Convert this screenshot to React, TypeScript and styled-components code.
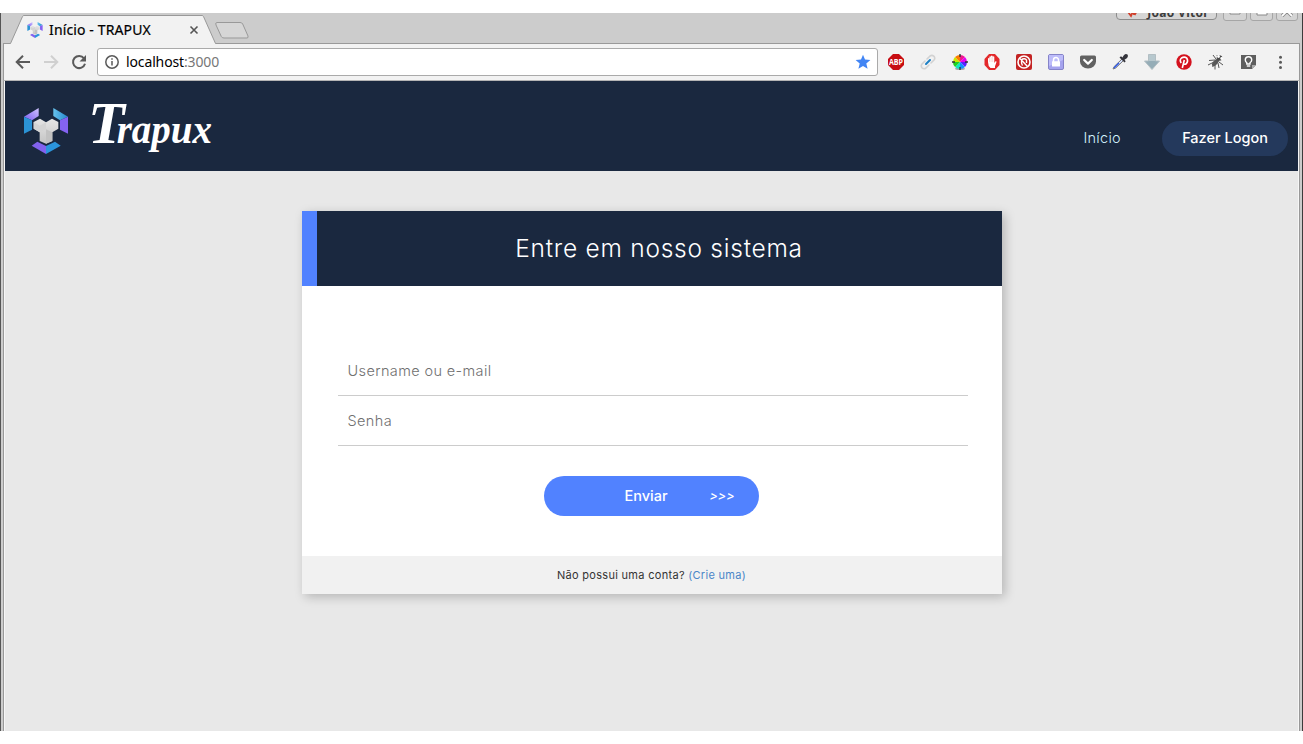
import React from 'react';
import styled, { createGlobalStyle } from 'styled-components';

const Global = createGlobalStyle`
  * { box-sizing: border-box; }
  html, body { margin: 0; padding: 0; background: #fff; }
  body { font-family: Inter, "Open Sans", sans-serif; overflow: hidden; }
  svg { display: block; flex: none; }
`;

const Screen = styled.div`
  width: 1303px;
  height: 744px;
  padding: 13px 0;
  background: #fff;
`;

const BrowserWindow = styled.div`
  height: 718px;
  display: flex;
  flex-direction: column;
  background: #ccc;
  border-left: 1px solid #555;
  border-right: 1px solid #3c3c3c;
`;

const TabStrip = styled.div`
  height: 30px;
  display: flex;
  align-items: flex-start;
  padding-left: 2px;
  flex: none;
  position: relative;
`;

const Tab = styled.div`
  position: relative;
  width: 208px;
  height: 31px;
  margin-left: 6px;
  z-index: 2;
`;

const TabShape = styled.svg`
  position: absolute;
  left: 0;
  top: 0;
`;

const TabContent = styled.div`
  position: relative;
  display: flex;
  align-items: center;
  height: 31px;
  padding: 3px 0 0 18px;
`;

const TabTitle = styled.span`
  margin-left: 6px;
  width: 140px;
  font: 14px/18px "Noto Sans", sans-serif;
  letter-spacing: 0.13px;
  color: #000;
  -webkit-text-stroke: 0.2px #000;
  white-space: nowrap;
`;

const NewTab = styled.svg`
  margin: 8px 0 0 -3px;
`;

const WindowControls = styled.div`
  margin-left: auto;
  height: 8px;
  display: flex;
  align-items: flex-end;
  overflow: hidden;
  padding-right: 4px;
`;

const ControlButton = styled.div<{ $width: number; $gap: number }>`
  width: ${p => p.$width}px;
  height: 20px;
  margin-left: ${p => p.$gap}px;
  border: 1px solid #a6a6a6;
  border-radius: 3px;
  background: #d4d4d4;
  display: flex;
  justify-content: center;
  align-items: center;
`;

const ProfileButton = styled.div`
  width: 101px;
  height: 16px;
  margin-bottom: 1px;
  padding: 1px 7px 0 9px;
  display: flex;
  align-items: center;
  justify-content: space-between;
  border: 1px solid #8c8c8c;
  border-radius: 4px;
  background: #d6d6d6;
  color: #3c3c3c;
  font: bold 12px/14px "Noto Sans", sans-serif;
  letter-spacing: 0.3px;
  white-space: nowrap;
`;

const Toolbar = styled.div`
  height: 38px;
  flex: none;
  margin: 0 2px;
  display: flex;
  align-items: center;
  background: #f2f2f2;
  border: 1px solid #999;
  border-bottom-color: #b5b5b5;
`;

const NavIcons = styled.div`
  width: 93px;
  display: flex;
  align-items: center;
  gap: 12px;
  padding-left: 11px;
  flex: none;
`;

const AddressBar = styled.div`
  width: 781px;
  height: 28px;
  display: flex;
  align-items: center;
  background: #fff;
  border: 1px solid #aaa;
  border-radius: 3px;
  padding: 0 6px 0 7px;
`;

const Url = styled.span`
  flex: 1;
  margin-left: 7px;
  font: 14px/20px "Noto Sans", sans-serif;
  letter-spacing: -0.13px;
  color: #000;
`;

const Port = styled.span`
  color: #777;
`;

const Extensions = styled.div`
  display: flex;
  margin-left: 2px;
`;

const Extension = styled.div`
  width: 32px;
  display: flex;
  justify-content: center;
  align-items: center;
`;

const Viewport = styled.div`
  flex: 1;
  margin: 0 2px;
  border: solid #999;
  border-width: 0 1px;
  padding: 0 1px;
  display: flex;
  background: #f6f6f6;
`;

const Page = styled.div`
  flex: 1;
  background: #e8e8e8;
  display: flex;
  flex-direction: column;
  align-items: center;
`;

const SiteHeader = styled.header`
  align-self: stretch;
  height: 90px;
  background: #1a283f;
  display: flex;
  align-items: flex-start;
  padding: 0 10px 0 19px;
`;

const Mark = styled.svg`
  margin-top: 27px;
`;

const Wordmark = styled.span`
  margin: 7px 0 0 20px;
  font: italic bold 39px/70px "Liberation Serif", serif;
  color: #fff;
`;

const Initial = styled.span`
  font-size: 60px;
  line-height: 70px;
  margin-right: -8px;
`;

const SiteNav = styled.nav`
  display: flex;
  align-items: center;
  margin: 40px 0 0 auto;
  height: 35px;
`;

const NavLink = styled.a`
  font-size: 14.500px;
  line-height: 20px;
  font-weight: 300;
  color: #d5f2fc;
  margin-right: 41px;
  padding-bottom: 2px;
  letter-spacing: 0.3px;
`;

const LogonButton = styled.button`
  width: 126px;
  height: 35px;
  padding: 0 0 2px;
  border: 0;
  border-radius: 18px;
  background: #24395c;
  color: #fff;
  font: 500 14.500px/20px Inter, sans-serif;
`;

const Card = styled.section`
  width: 700px;
  margin-top: 40px;
  background: #fff;
  box-shadow: 3px 3px 10px rgba(0, 0, 0, 0.22);
`;

const CardTitle = styled.h1`
  margin: 0;
  height: 75px;
  border-left: 15px solid #5182ff;
  background: #1a283f;
  color: #fff;
  font: 300 24.500px/75px Inter, sans-serif;
  letter-spacing: 0.75px;
  text-align: center;
`;

const LoginForm = styled.div`
  height: 270px;
  padding: 60px 34px 0 36px;
  display: flex;
  flex-direction: column;
`;

const Field = styled.div`
  height: 50px;
  padding-left: 10px;
  border-bottom: 1px solid #ccc;
  color: #707070;
  font-size: 14.500px;
  font-weight: 300;
  line-height: 49px;
  letter-spacing: 0.38px;
`;

const SubmitButton = styled.button`
  width: 215px;
  height: 40px;
  margin: 30px 0 0 206px;
  padding: 0 24px 0 81px;
  border: 0;
  border-radius: 20px;
  background: #5182ff;
  color: #fff;
  font: 500 14.500px/20px Inter, sans-serif;
  display: flex;
  align-items: center;
  justify-content: space-between;
`;

const Chevrons = styled.span`
  font-size: 12.500px;
  font-style: italic;
`;

const CardFooter = styled.div`
  height: 38px;
  background: #f1f1f1;
  color: #333;
  text-align: center;
  font-size: 11px;
  line-height: 38px;
  letter-spacing: 0.3px;
`;

const SignUpLink = styled.a`
  color: #4a86c8;
`;

function LogoPieces() {
  return (
    <>
      <defs>
        <linearGradient id="lilac" x1="0" x2="1" y1="1" y2="0">
          <stop offset="0" stopColor="#7b5cf0" />
          <stop offset="1" stopColor="#d0c4ff" />
        </linearGradient>
        <linearGradient id="sky" x1="0" x2="1">
          <stop offset="0" stopColor="#67c3ee" />
          <stop offset="1" stopColor="#2387cc" />
        </linearGradient>
        <linearGradient id="silver" x1="0" x2="0" y1="0" y2="1">
          <stop offset="0" stopColor="#e6e6e6" />
          <stop offset="1" stopColor="#c4c4c4" />
        </linearGradient>
      </defs>
      <path d="M72 110 116 84V108L96 121Z" fill="url(#lilac)" />
      <path d="M72 110 96 121V149L72 161Z" fill="#2b93d5" />
      <path d="M204 110 160 84V108L180 121Z" fill="url(#sky)" />
      <path d="M204 110 180 121V149L204 161Z" fill="#8463f2" />
      <path d="M95 197 112 185 138 198V222Z" fill="#8262ee" />
      <path d="M182 197 165 185 138 198V222Z" fill="#2b95dc" />
      <path d="M101 126 120 116 138 127 156 116 175 126V146L157 157V183L138 191 119 183V157L101 146Z" fill="url(#silver)" />
      <path d="M138 148V127L119 137 101 126V146L119 157Z" fill="#d4d4d4" />
      <path d="M138 148 157 157V183L138 191Z" fill="#c2c2c2" />
    </>
  );
}

function Abp() {
  return (
    <svg width="16" height="16" viewBox="0 0 16 16">
      <path d="M5 0h6l5 5v6l-5 5H5l-5-5V5Z" fill="#c70d12" />
      <text x="8" y="11" textAnchor="middle" fontFamily="Open Sans, sans-serif" fontWeight="700" fontSize="8" textLength="14" lengthAdjust="spacingAndGlyphs" fill="#fff">ABP</text>
    </svg>
  );
}

function LinkIcon() {
  return (
    <svg width="16" height="16" viewBox="0 0 16 16" fill="none" strokeLinecap="round">
      <path d="m7 5 3-3q2-1.500 4 .3 1.500 2 0 3.700l-3 3M9 11l-3 3q-2 1.500-4-.2-1.500-2 0-3.800l3-3" stroke="#d2d2d2" strokeWidth="1.600" />
      <path d="m6 10 4-4" stroke="#1c7fc4" strokeWidth="2" />
    </svg>
  );
}

const wheelColors = ['#f0188c', '#e800f0', '#5a20ff', '#1090ff', '#10e8c0', '#20d020', '#c8e800', '#ff7a00'];

function ColorWheel() {
  return (
    <svg width="16" height="16" viewBox="-8 -8 16 16">
      <ellipse cx="0" cy="6.800" rx="5" ry="1.200" fill="#aaa" />
      {wheelColors.map((color, i) => (
        <path key={color} d="M0 0V-7A7 7 0 0 1 5 -5Z" fill={color} transform={`rotate(${i * 45})`} />
      ))}
      <path d="M0-8v3M0 5v3M-8 0h3M5 0h3" stroke="#333" strokeWidth="1.400" />
    </svg>
  );
}

function HandStop() {
  return (
    <svg width="16" height="16" viewBox="0 0 16 16">
      <path d="M5 0h6l4.500 5v6L11 16H5L.5 11V5Z" fill="#e3292b" />
      <path d="M4 8V4.500q.7-1 1.400 0V2.700q.8-1 1.600 0V2q.8-1 1.600 0v.8q.9-1 1.700 0V9l1.200-1.800q1.300-.3 1 .8L11 12.300V14H6.500Q4 12 4 8Z" fill="#fff" />
      <path d="M5.500 4.500V8M7.100 3v5M8.700 3v5" stroke="#f3b7b7" strokeWidth=".5" />
    </svg>
  );
}

function BlockIcon() {
  return (
    <svg width="16" height="16" viewBox="0 0 16 16" fill="none">
      <rect width="16" height="16" rx="2" fill="#c32323" />
      <circle cx="8" cy="8" r="6" stroke="#fff" strokeWidth="1.600" />
      <path d="M4 4.500 11.500 12.500M6.500 11.500Q4.500 8 6.500 5q3-1 4 1v3" stroke="#fff" strokeWidth="1.400" />
    </svg>
  );
}

function LockIcon() {
  return (
    <svg width="16" height="16" viewBox="0 0 16 16">
      <rect x=".5" y=".5" width="15" height="15" rx="1.500" fill="#a5a3ee" stroke="#8583c8" />
      <path d="M1 1h14v5L1 12Z" fill="#bdbcfa" />
      <path d="M5.500 8V6a2.500 2.500 0 0 1 5 0v2" fill="none" stroke="#fff" strokeWidth="1.500" />
      <rect x="4" y="7.300" width="8" height="5.200" rx=".5" fill="#fff" />
    </svg>
  );
}

function PocketIcon() {
  return (
    <svg width="16" height="16" viewBox="0 0 16 16">
      <path d="M1.500 1.500h13q1.500 0 1.500 1.500v4.500a8 7 0 0 1-16 0V3q0-1.500 1.500-1.500Z" fill="#626262" />
      <path d="m4.200 6 3.800 3.600L11.800 6" fill="none" stroke="#fff" strokeWidth="2.200" strokeLinecap="round" strokeLinejoin="round" />
    </svg>
  );
}

function DropperIcon() {
  return (
    <svg width="16" height="16" viewBox="0 0 16 16">
      <path d="M10 5 2.200 12.500 1 15l2.700-1L11.500 6.500" fill="#d9e4ff" stroke="#777" />
      <path d="m7 9-5 5" stroke="#345de8" strokeWidth="1.500" />
      <path d="m7.500 3.500 5 5 1.200-1.200-1.200-1.500Q16 4 16 2T14 0Q12 0 10.500 3.500L9 2.200Z" fill="#35353c" />
    </svg>
  );
}

function DownloadIcon() {
  return (
    <svg width="16" height="16" viewBox="0 0 16 16">
      <path d="M4.500.5h7v6.500h4L8 15.500.5 7h4Z" fill="#95adb7" stroke="#b2bec3" />
      <path d="M5 1h6v6H5Z" fill="#b7c8ce" />
    </svg>
  );
}

function PinterestIcon() {
  return (
    <svg width="16" height="16" viewBox="0 0 16 16" fill="none">
      <circle cx="8" cy="8" r="7.700" fill="#d4121e" />
      <path d="M5.200 9Q3.200 6 5.500 4q3-1.800 5.300.2 1.800 3-.5 5.600-2 1.200-3-.5M8.300 6 6.300 14" stroke="#fff" strokeWidth="1.600" />
    </svg>
  );
}

function BugIcon() {
  return (
    <svg width="16" height="16" viewBox="0 0 16 16" fill="none">
      <path d="M9 7 4.500 13M7 6 1 6.500M6 8 0 11M7 10v5.500M10 9l1 5M11 8l4 3M8 5 5 1M10 4 9 1" stroke="#555" strokeWidth="1" />
      <ellipse cx="7.500" cy="8.500" rx="2.200" ry="4.600" transform="rotate(42 7.500 8.500)" fill="#575757" />
      <circle cx="11.500" cy="4" r="2.800" fill="#4b4b4b" />
      <circle cx="10.500" cy="2.500" r="1.400" fill="#fff" />
      <circle cx="13.700" cy="4.500" r="1.400" fill="#fff" />
    </svg>
  );
}

function KeepIcon() {
  return (
    <svg width="16" height="16" viewBox="0 0 16 16" fill="none">
      <path d="M1 1h15v10l-4 4H1Z" fill="#5e5e5e" />
      <path d="M12 15v-4h4Z" fill="#aaa" />
      <path d="M6.800 10V8.800Q5.300 7.500 5.300 6a3.200 3.200 0 0 1 6.400 0q0 1.500-1.700 2.800V10Z" stroke="#fff" strokeWidth="1.400" />
      <path d="M6.800 12h3.400" stroke="#fff" strokeWidth="1.400" />
    </svg>
  );
}

function MenuIcon() {
  return (
    <svg width="16" height="16" viewBox="0 0 16 16" fill="#5a5a5a">
      <circle cx="8.500" cy="3.200" r="1.500" /><circle cx="8.500" cy="8.300" r="1.500" /><circle cx="8.500" cy="13.400" r="1.500" />
    </svg>
  );
}

const extensionIcons = [Abp, LinkIcon, ColorWheel, HandStop, BlockIcon, LockIcon, PocketIcon, DropperIcon, DownloadIcon, PinterestIcon, BugIcon, KeepIcon, MenuIcon];

export default function App() {
  return (
    <Screen>
      <Global />
      <BrowserWindow>
        <TabStrip>
          <Tab>
            <TabShape width="208" height="31" viewBox="0 0 208 31">
              <path d="M0 30.500H1.500L13.500 3.500Q14 2.500 15 2.500H193Q194 2.500 194.500 3.500L206.500 30.500H208V31H0Z" fill="#f2f2f2" />
              <path d="M0 30.500H1.500L13.500 3.500Q14 2.500 15 2.500H193Q194 2.500 194.500 3.500L206.500 30.500H208" fill="none" stroke="#999" />
            </TabShape>
            <TabContent>
              <svg width="16" height="16" viewBox="70 84 136 138"><LogoPieces /></svg>
              <TabTitle>Início - TRAPUX</TabTitle>
              <svg width="10" height="10" viewBox="0 0 10 10"><path d="m1.500 1.500 7 7m0-7-7 7" stroke="#555" strokeWidth="1.600" /></svg>
            </TabContent>
          </Tab>
          <NewTab width="36" height="18" viewBox="0 0 36 18">
            <path d="M3 1.500H26Q28 1.500 28.700 3L34 15Q34.500 17 33 17H10Q8 17 7.300 15.500L2 4Q1 1.500 3 1.500Z" fill="#d6d6d6" stroke="#999" />
          </NewTab>
          <WindowControls>
            <ProfileButton>
              <svg width="12" height="12" viewBox="0 0 12 12"><path d="M1 3.500 5 9 6.500 5.500M8 4v4M8.500 8 11 4" fill="none" stroke="#d0402c" strokeWidth="1.800" /></svg>
              <span>João Vitor</span>
            </ProfileButton>
            <ControlButton $width={24} $gap={6}>
              <svg width="12" height="12" viewBox="0 0 12 12"><path d="M1 6.500h10v2.500H1Z" fill="#fff" stroke="#888" /></svg>
            </ControlButton>
            <ControlButton $width={23} $gap={3}>
              <svg width="12" height="12" viewBox="0 0 12 12"><path d="M1 1h10v9H1Z" fill="#fff" stroke="#888" /><path d="M4 4h4v3H4Z" fill="#d4d4d4" stroke="#888" /></svg>
            </ControlButton>
            <ControlButton $width={22} $gap={3}>
              <svg width="12" height="12" viewBox="0 0 12 12"><path d="m1 1 10 10M11 1 1 11" stroke="#888" strokeWidth="3.500" /><path d="m1 1 10 10M11 1 1 11" stroke="#fff" strokeWidth="1.800" /></svg>
            </ControlButton>
          </WindowControls>
        </TabStrip>
        <Toolbar>
          <NavIcons>
            <svg width="16" height="16" viewBox="0 0 16 16" fill="none" stroke="#5a5a5a" strokeWidth="2"><path d="M15 8H2.500M8 1.700 1.700 8 8 14.300" /></svg>
            <svg width="16" height="16" viewBox="0 0 16 16" fill="none" stroke="#d0d0d0" strokeWidth="2"><path d="M1 8h12.500M8 1.700 14.300 8 8 14.300" /></svg>
            <svg width="16" height="16" viewBox="0 0 16 16"><path d="M13 4.300A6.100 6.100 0 1 0 14 9.700" fill="none" stroke="#5a5a5a" strokeWidth="2" /><path d="M15 1v6.500H8.500Z" fill="#5a5a5a" /></svg>
          </NavIcons>
          <AddressBar>
            <svg width="14" height="14" viewBox="0 0 14 14" fill="none" stroke="#5a5a5a" strokeWidth="1.500"><circle cx="7" cy="7" r="6.200" /><path d="M7 6v4.500M7 3.200v1.600" /></svg>
            <Url>localhost<Port>:3000</Port></Url>
            <svg width="16" height="16" viewBox="0 0 16 16"><path d="m8 .7 2 4.900 5.400.4-4.100 3.500 1.300 5.300L8 12l-4.600 2.800 1.300-5.300L.6 6 6 5.600Z" fill="#4285f4" /></svg>
          </AddressBar>
          <Extensions>
            {extensionIcons.map((Icon, i) => <Extension key={i}><Icon /></Extension>)}
          </Extensions>
        </Toolbar>
        <Viewport>
          <Page>
            <SiteHeader>
              <Mark width="44" height="46" viewBox="72 84 132 138"><LogoPieces /></Mark>
              <Wordmark><Initial>T</Initial>rapux</Wordmark>
              <SiteNav>
                <NavLink>Início</NavLink>
                <LogonButton>Fazer Logon</LogonButton>
              </SiteNav>
            </SiteHeader>
            <Card>
              <CardTitle>Entre em nosso sistema</CardTitle>
              <LoginForm>
                <Field>Username ou e-mail</Field>
                <Field>Senha</Field>
                <SubmitButton><span>Enviar</span><Chevrons>&gt;&gt;&gt;</Chevrons></SubmitButton>
              </LoginForm>
              <CardFooter>Não possui uma conta? <SignUpLink>(Crie uma)</SignUpLink></CardFooter>
            </Card>
          </Page>
        </Viewport>
      </BrowserWindow>
    </Screen>
  );
}
